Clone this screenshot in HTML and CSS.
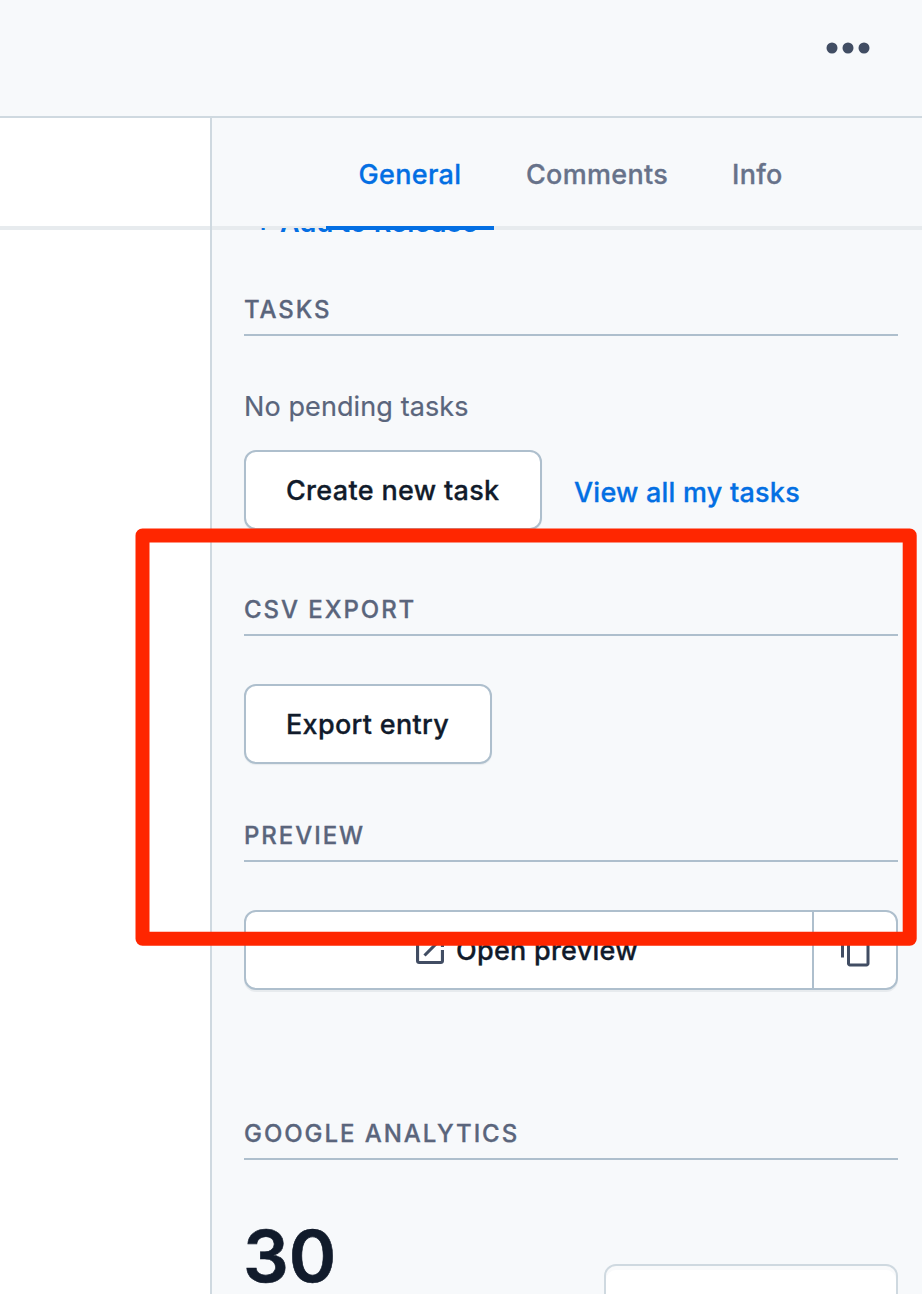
FILE: index.html
```html
<!DOCTYPE html>
<html lang="en">
<head>
<meta charset="utf-8">
<title>Entry editor</title>
<link rel="stylesheet" href="styles.css">
</head>
<body>
<div class="page">
  <header class="topbar">
    <svg class="more" width="44" height="12" viewBox="0 0 44 12"><circle cx="6" cy="6" r="5.5"/><circle cx="22" cy="6" r="5.5"/><circle cx="38" cy="6" r="5.5"/></svg>
  </header>
  <div class="workspace">
    <main class="editor"><div class="editor-head"></div></main>
    <aside class="sidebar">
      <nav class="tabs">
        <a class="tab tab-general active"><span>General</span></a>
        <a class="tab tab-comments"><span>Comments</span></a>
        <a class="tab tab-info"><span>Info</span></a>
      </nav>
      <div class="panel">
        <a class="add-link"><span class="plus">+</span><span class="add-text">Add to Release</span></a>
        <section class="section tasks">
          <h2 class="heading">Tasks</h2>
          <p class="pending">No pending tasks</p>
          <div class="actions">
            <button class="button create">Create new task</button>
            <a class="view-link">View all my tasks</a>
          </div>
        </section>
        <section class="section export-section">
          <h2 class="heading">CSV Export</h2>
          <button class="button export">Export entry</button>
        </section>
        <section class="section preview">
          <h2 class="heading">Preview</h2>
          <div class="button-group">
            <button class="open"><svg class="icon" width="28" height="28" viewBox="3 3 18 18"><path d="M19 19H5V5h7V3H5c-1.11 0-2 .9-2 2v14c0 1.1.89 2 2 2h14c1.1 0 2-.9 2-2v-7h-2v7zM14 3v2h3.59l-9.83 9.83 1.41 1.41L19 6.41V10h2V3h-7z"/></svg><span>Open preview</span></button>
            <button class="copy"><svg class="icon" width="36" height="36" viewBox="0 0 24 24"><path d="M16 1H4c-1.1 0-2 .9-2 2v14h2V3h12V1zm3 4H8c-1.1 0-2 .9-2 2v14c0 1.1.9 2 2 2h11c1.1 0 2-.9 2-2V7c0-1.1-.9-2-2-2zm0 16H8V7h11v14z"/></svg></button>
          </div>
        </section>
        <section class="section">
          <h2 class="heading">Google Analytics</h2>
          <div class="stats"><div class="count">30</div><div class="range"></div></div>
        </section>
      </div>
    </aside>
  </div>
  <svg class="highlight" width="784" height="420" viewBox="0 0 784 420"><rect x="8.5" y="8.5" width="767.2" height="403.2"/></svg>
</div>
</body>
</html>
```
FILE: styles.css
```css
* { box-sizing: border-box; }
body { margin: 0; font-family: Inter, "Liberation Sans", sans-serif; font-size: 27px; color: #111b2b; background: #fff; }
h2, p { margin: 0; }
button { font: inherit; color: inherit; padding: 0; background: none; border: 0; }
.page { position: relative; width: 922px; height: 1294px; overflow: hidden; display: flex; flex-direction: column; }
.topbar { height: 118px; flex: none; background: #f7f9fb; border-bottom: 2px solid #cfd9e0; display: flex; justify-content: flex-end; padding: 42px 52px 0 0; }
.more { fill: #414d63; }
.workspace { flex: 1; min-height: 0; display: flex; }
.editor { width: 210px; background: #fff; }
.editor-head { height: 112px; border-bottom: 4px solid #e7ebee; }
.sidebar { flex: 1; min-width: 0; display: flex; flex-direction: column; background: #f7f9fb; border-left: 2px solid #cfd9e0; }
.tabs { height: 112px; flex: none; display: flex; padding-left: 114px; border-bottom: 4px solid #e7ebee; }
.tab, .button, .view-link, .open { font-weight: 500; letter-spacing: 0.32px; -webkit-text-stroke: 0.3px currentColor; white-space: nowrap; }
.tab { height: 112px; padding-left: 32px; line-height: 114px; color: #67728a; }
.tab-general { width: 168px; padding-left: 32.5px; }
.tab-comments { width: 206px; }
.tab-info { width: 116px; }
.active { color: #036fe3; border-bottom: 4px solid #036fe3; }
.panel { flex: 1; min-height: 0; margin-top: -2px; padding: 0 24px 0 32px; overflow: hidden; }
.add-link { display: flex; margin: -19px 0 61px; height: 28px; line-height: 28px; font-weight: 600; letter-spacing: 0.2px; color: #036fe3; white-space: nowrap; }
.plus { width: 36px; padding-left: 10px; line-height: 26px; }
.heading { height: 38px; padding-bottom: 12px; border-bottom: 2px solid #aebfcd; font-size: 24px; line-height: 24px; font-weight: 500; letter-spacing: 1.94px; -webkit-text-stroke: 0.3px currentColor; text-transform: uppercase; color: #5a657c; white-space: nowrap; }
.tasks { height: 300px; }
.pending { margin-top: 51px; height: 40px; line-height: 40px; letter-spacing: 0.1px; -webkit-text-stroke: 0.2px currentColor; color: #5a657c; }
.actions { display: flex; margin-top: 23px; gap: 32px; }
.button { display: block; height: 80px; background: #fff; border: 2px solid #aebfcd; border-radius: 12px; padding: 0 0 0 40px; text-align: left; box-shadow: 0 1px 1px #e7ebee; }
.create { width: 298px; }
.view-link { line-height: 86px; height: 80px; letter-spacing: 0.22px; color: #036fe3; }
.export-section { height: 226px; }
.export { width: 248px; margin-top: 48px; }
.preview { height: 298px; }
.button-group { display: flex; height: 80px; margin-top: 48px; background: #fff; border: 2px solid #aebfcd; border-radius: 12px; box-shadow: 0 2px 0 #e7ebee; }
.open { flex: 1; display: flex; align-items: center; gap: 12px; padding-left: 170px; letter-spacing: 0.25px; }
.copy { width: 84px; border-left: 2px solid #aebfcd; display: flex; align-items: center; padding-left: 24px; }
.icon { fill: #414d63; flex: none; }
.stats { display: flex; justify-content: space-between; align-items: flex-start; padding-top: 56px; }
.count { margin-left: -1px; font-size: 72px; line-height: 80px; font-weight: 600; -webkit-text-stroke: 0.6px currentColor; }
.range { width: 294px; height: 80px; margin-top: 48px; background: #fff; border: 2px solid #cfd9e0; border-radius: 12px; box-shadow: inset 0 4px 0 #f9fafb; }
.highlight { position: absolute; left: 134px; top: 527px; fill: none; stroke: #ff2600; stroke-width: 14px; stroke-linejoin: round; }
```
